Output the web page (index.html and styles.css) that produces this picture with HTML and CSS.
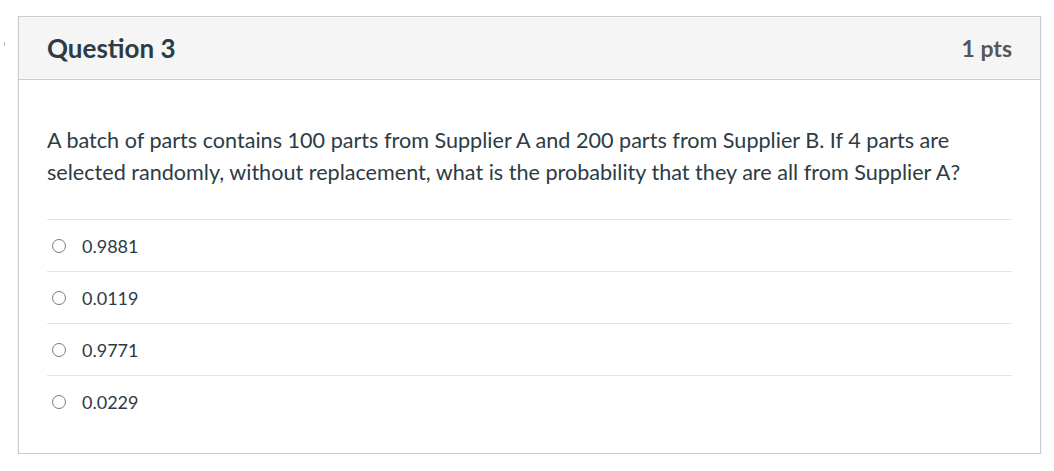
FILE: index.html
```html
<!DOCTYPE html>
<html>
<head>
<meta charset="utf-8">
<link rel="stylesheet" href="styles.css">
</head>
<body>
<span class="edge-mark"></span>
<div class="question">
  <div class="q-header">
    <span class="q-title">Question 3</span>
    <span class="q-points">1 pts</span>
  </div>
  <div class="q-body">
    <p class="q-text">A batch of parts contains 100 parts from Supplier A and 200 parts from Supplier B. If 4 parts are selected randomly, without replacement, what is the probability that they are all from Supplier A?</p>
    <div class="answers">
      <label class="answer"><span class="radio"></span><span class="a-text">0.9881</span></label>
      <label class="answer"><span class="radio"></span><span class="a-text">0.0119</span></label>
      <label class="answer"><span class="radio"></span><span class="a-text">0.9771</span></label>
      <label class="answer"><span class="radio"></span><span class="a-text">0.0229</span></label>
    </div>
  </div>
</div>
</body>
</html>
```
FILE: styles.css
```css
html, body {
  margin: 0;
  padding: 0;
  background: #ffffff;
}
body {
  font-family: Lato, "Open Sans", sans-serif;
  color: #2d3b45;
  padding: 16px 12px 0 18px;
}
.edge-mark {
  position: absolute;
  left: 4px;
  top: 42px;
  width: 1px;
  height: 4px;
  background: #9fb3c8;
}
.question {
  border: 1px solid #c7cdd1;
  box-shadow: 0 1px 2px rgba(0,0,0,0.12);
  width: 1023px;
  box-sizing: border-box;
}
.q-header {
  background: #f5f5f5;
  border-bottom: 1px solid #c7cdd1;
  height: 63px;
  box-sizing: border-box;
  display: flex;
  align-items: center;
  justify-content: space-between;
  padding: 0 28px 0 28px;
}
.q-title {
  font-weight: 700;
  font-size: 26px;
}
.q-points {
  font-weight: 700;
  font-size: 23px;
  color: #575757;
}
.q-body {
  padding: 44px 28px 26px 28px;
}
.q-text {
  margin: 0 0 31px 0;
  font-size: 21.6px;
  line-height: 32px;
}
.answers {
  display: flex;
  flex-direction: column;
}
.answer {
  display: flex;
  align-items: center;
  border-top: 1px solid #e2e5e7;
  height: 52px;
  box-sizing: border-box;
  padding-left: 5px;
}
.radio {
  width: 14px;
  height: 14px;
  border: 1.5px solid #7a7a7a;
  border-radius: 50%;
  box-sizing: border-box;
  margin-right: 16px;
  flex: none;
}
.a-text {
  font-size: 18px;
}
```
